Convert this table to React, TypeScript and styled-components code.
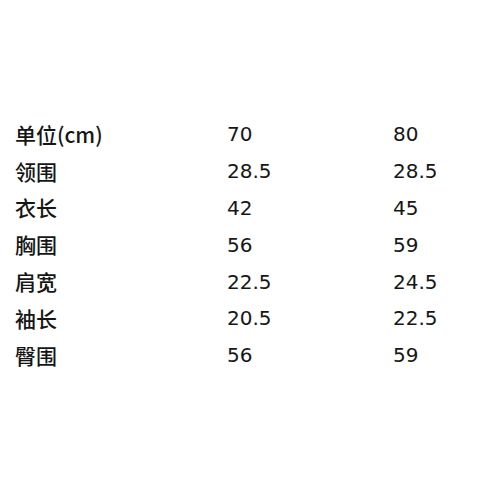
import React from 'react';
import styled, { createGlobalStyle } from 'styled-components';

const GlobalStyle = createGlobalStyle`
  html, body {
    margin: 0;
    padding: 0;
    background: #ffffff;
  }
`;

const Page = styled.div`
  width: 500px;
  height: 500px;
  box-sizing: border-box;
  padding: 116px 0 0 15px;
  font-family: "DejaVu Sans", "Noto Sans CJK SC", sans-serif;
  color: #161616;
`;

const SizeTable = styled.div`
  display: grid;
  grid-template-columns: 212px 166px 1fr;
  grid-auto-rows: 36.8px;
  align-items: center;
`;

const Cell = styled.div<{ $label?: boolean }>`
  line-height: 1;
  white-space: pre;
  font-family: ${({ $label }) =>
    $label ? '"Noto Sans CJK SC", sans-serif' : 'inherit'};
  font-size: ${({ $label }) => ($label ? '21px' : '20px')};
  font-weight: ${({ $label }) => ($label ? 500 : 400)};
`;

const rows: [string, string, string][] = [
  ['单位(cm)', '70', '80'],
  ['领围', '28.5', '28.5'],
  ['衣长', '42', '45'],
  ['胸围', '56', '59'],
  ['肩宽', '22.5', '24.5'],
  ['袖长', '20.5', '22.5'],
  ['臀围', '56', '59'],
];

export default function App() {
  return (
    <>
      <GlobalStyle />
      <Page>
        <SizeTable>
          {rows.map(([label, a, b]) => (
            <React.Fragment key={label}>
              <Cell $label>{label}</Cell>
              <Cell>{a}</Cell>
              <Cell>{b}</Cell>
            </React.Fragment>
          ))}
        </SizeTable>
      </Page>
    </>
  );
}
